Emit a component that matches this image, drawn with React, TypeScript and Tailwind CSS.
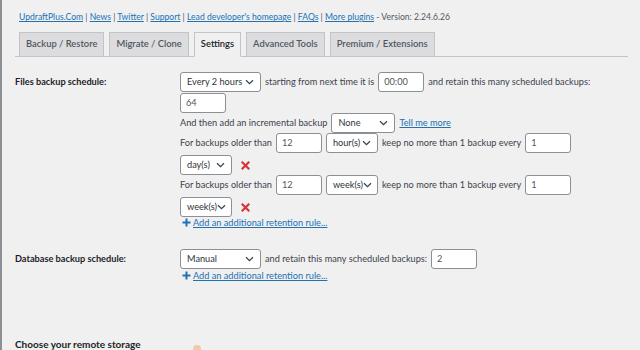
import React from 'react';

const font = { fontFamily: 'Lato, "Open Sans", sans-serif' };

const Chevron = () => (
  <svg width="9" height="6" viewBox="0 0 9 6" className="shrink-0">
    <path d="M1 1.2 L4.5 4.6 L8 1.2" fill="none" stroke="#3c434a" strokeWidth="1.3" />
  </svg>
);

const Select = ({ value, w }: { value: string; w: string }) => (
  <div className={`${w} h-[20px] shrink-0 flex items-center justify-between pl-[6px] pr-[6px] bg-white border border-[#8c8f94] rounded-[3px] text-[#2c3338] whitespace-nowrap`}>
    <span>{value}</span>
    <Chevron />
  </div>
);

const Input = ({ value, w = 'w-[46px]' }: { value: string; w?: string }) => (
  <div className={`${w} h-[20px] shrink-0 flex items-center px-[5px] bg-white border border-[#8c8f94] rounded-[3px] text-[#50575e]`}>
    {value}
  </div>
);

const Remove = () => (
  <svg width="9" height="9" viewBox="0 0 9 9" className="ml-[9px]">
    <path d="M1.5 1.5 L7.5 7.5 M7.5 1.5 L1.5 7.5" stroke="#d63638" strokeWidth="2.2" strokeLinecap="square" />
  </svg>
);

const AddRule = () => (
  <div className="flex items-center gap-[2px] ml-[2px] h-[11px]">
    <svg width="9" height="9" viewBox="0 0 9 9">
      <path d="M4.5 0.5 V8.5 M0.5 4.5 H8.5" stroke="#2271b1" strokeWidth="2" />
    </svg>
    <a className="text-[#2271b1] underline">Add an additional retention rule...</a>
  </div>
);

const links = ['UpdraftPlus.Com', 'News', 'Twitter', 'Support', "Lead developer's homepage", 'FAQs', 'More plugins'];
const tabs = ['Backup / Restore', 'Migrate / Clone', 'Settings', 'Advanced Tools', 'Premium / Extensions'];

const RuleRows = ({ unit }: { unit: string }) => (
  <>
    <div className="flex items-center h-[20px] gap-[4px] whitespace-nowrap">
      <span>For backups older than</span>
      <Input value="12" />
      <Select value={unit} w="w-[52px]" />
      <span>keep no more than 1 backup every</span>
      <Input value="1" />
    </div>
    <div className="flex items-center h-[20px] mt-[2px]">
      <Select value={unit === 'hour(s)' ? 'day(s)' : 'week(s)'} w="w-[52px]" />
      <Remove />
    </div>
  </>
);

export default function App() {
  return (
    <div style={font} className="w-[640px] h-[350px] overflow-hidden bg-[#f0f0f1] border-l-2 border-[#8c8f94] text-[9.2px] text-[#3c434a]">
      <div className="pl-[17px] pt-[11px] h-[32px] text-[8.6px] text-[#50575e] whitespace-nowrap">
        {links.map((l, i) => (
          <span key={l}>
            <a className="text-[#2271b1] underline">{l}</a>
            {i < links.length - 1 ? ' | ' : ''}
          </span>
        ))}
        <span> - Version: 2.24.6.26</span>
      </div>

      <div className="ml-[13px] mr-[12px] flex items-end gap-[5px] pl-[4px] border-b border-[#c3c4c7] h-[25px]">
        {tabs.map((t) => (
          <div
            key={t}
            className={
              t === 'Settings'
                ? 'h-[25px] -mb-px px-[6px] flex items-center bg-[#f0f0f1] border border-[#c3c4c7] border-b-[#f0f0f1] text-[9.4px] font-semibold text-[#1d2327] whitespace-nowrap'
                : 'h-[24px] px-[6px] flex items-center bg-[#dcdcde] border border-[#c3c4c7] border-b-0 text-[9.4px] font-semibold text-[#50575e] whitespace-nowrap'
            }
          >
            {t}
          </div>
        ))}
      </div>

      <div className="pl-[13px] pt-[15px] grid grid-cols-[165px_1fr]">
        <div className="h-[20px] flex items-center font-bold text-[#1d2327]">Files backup schedule:</div>
        <div className="flex flex-col">
          <div className="flex items-center h-[20px] gap-[4px] whitespace-nowrap">
            <Select value="Every 2 hours" w="w-[81px]" />
            <span>starting from next time it is</span>
            <Input value="00:00" />
            <span>and retain this many scheduled backups:</span>
          </div>
          <div className="flex mt-[1px]">
            <Input value="64" />
          </div>
          <div className="flex items-center h-[20px] gap-[4px] whitespace-nowrap">
            <span>And then add an incremental backup</span>
            <Select value="None" w="w-[64px]" />
            <a className="text-[#2271b1] underline">Tell me more</a>
          </div>
          <RuleRows unit="hour(s)" />
          <RuleRows unit="week(s)" />
          <AddRule />
        </div>

        <div className="h-[20px] mt-[21px] flex items-center font-bold text-[#1d2327]">Database backup schedule:</div>
        <div className="flex flex-col mt-[21px]">
          <div className="flex items-center h-[20px] gap-[4px] whitespace-nowrap">
            <Select value="Manual" w="w-[81px]" />
            <span>and retain this many scheduled backups:</span>
            <Input value="2" />
          </div>
          <div className="mt-[1px]">
            <AddRule />
          </div>
        </div>

        <div className="mt-[56px] font-bold text-[10px] text-[#1d2327] whitespace-nowrap">Choose your remote storage</div>
        <div className="mt-[64px] pl-[13px]">
          <div className="w-[8px] h-[8px] rounded-full bg-[#f2c9a8]" />
        </div>
      </div>
    </div>
  );
}
